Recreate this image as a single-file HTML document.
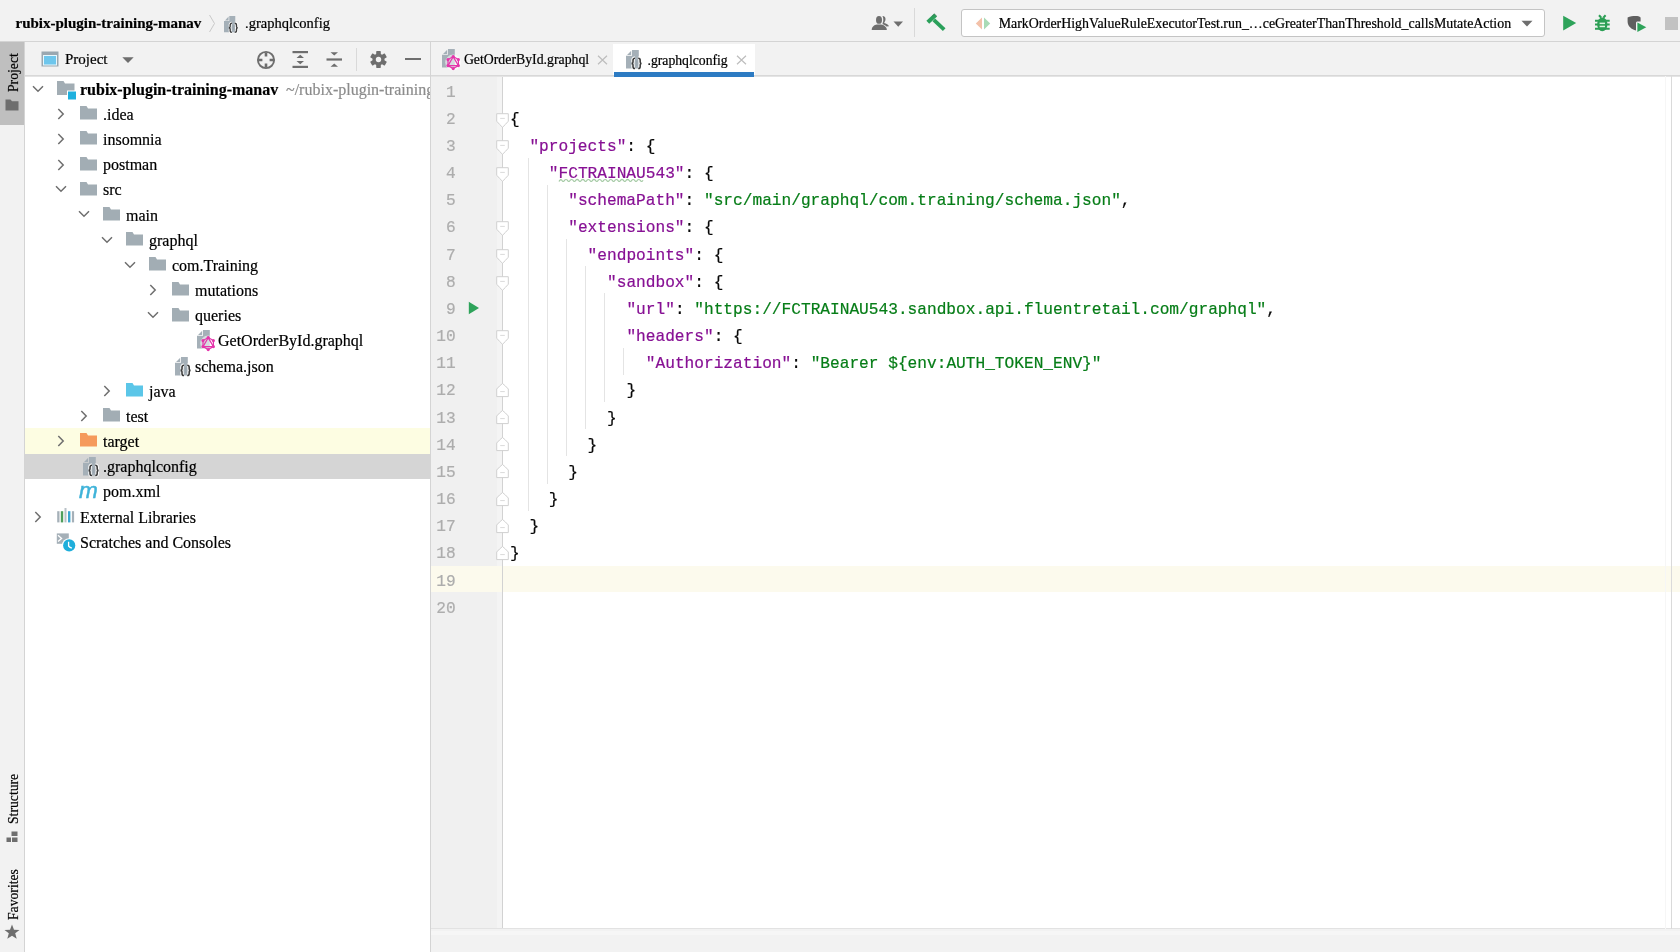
<!DOCTYPE html>
<html><head><meta charset="utf-8">
<style>
*{box-sizing:border-box;margin:0;padding:0}
html,body{width:1680px;height:952px;overflow:hidden;background:#f2f2f2;font-family:"Liberation Serif",serif;color:#000;position:relative}
body{will-change:transform}
.a{position:absolute}
.t{position:absolute;white-space:nowrap;line-height:1;-webkit-text-stroke:0.2px currentColor}
svg{overflow:visible}
</style></head><body>
<div class="a" style="left:0px;top:0px;width:1680px;height:41px;background:#f2f2f2;"></div>
<div class="a" style="left:0px;top:41px;width:1680px;height:1px;background:#d4d4d4;"></div>
<div class="a" style="left:0px;top:42px;width:24px;height:910px;background:#f2f2f2;"></div>
<div class="a" style="left:24px;top:42px;width:1px;height:910px;background:#d4d4d4;"></div>
<div class="a" style="left:0px;top:42px;width:24px;height:83px;background:#bfbfbf;"></div>
<div class="a" style="left:25px;top:42px;width:405px;height:910px;background:#ffffff;"></div>
<div class="a" style="left:25px;top:42px;width:405px;height:33px;background:#f2f2f2;"></div>
<div class="a" style="left:25px;top:75px;width:405px;height:1px;background:#d8d8d8;"></div>
<div class="a" style="left:430px;top:42px;width:1px;height:910px;background:#d4d4d4;"></div>
<div class="a" style="left:431px;top:42px;width:1249px;height:33px;background:#f2f2f2;"></div>
<div class="a" style="left:431px;top:75px;width:1249px;height:1px;background:#d8d8d8;"></div>
<div class="a" style="left:431px;top:76px;width:1249px;height:853px;background:#ffffff;"></div>
<div class="a" style="left:431px;top:76px;width:66px;height:853px;background:#f0f0f0;"></div>
<div class="a" style="left:497px;top:76px;width:5px;height:853px;background:#f4f4f4;"></div>
<div class="a" style="left:502px;top:76px;width:1px;height:853px;background:#d2d2d2;"></div>
<div class="a" style="left:1671px;top:76px;width:1px;height:853px;background:#dadada;"></div>
<div class="a" style="left:25px;top:76px;width:405px;height:1px;background:#e4e4e4;"></div>
<div class="a" style="left:431px;top:76px;width:1249px;height:1px;background:#e4e4e4;"></div>
<div class="a" style="left:431px;top:929px;width:1249px;height:23px;background:#f2f2f2;"></div>
<div class="a" style="left:431px;top:928px;width:1249px;height:1px;background:#e2e2e2;"></div>
<div class="a" style="left:431px;top:931px;width:1249px;height:4px;background:#f6f6f6;"></div>
<div class="t" style="left:15.50px;top:15.64px;font-size:15px;color:#000;font-family:'Liberation Serif',serif;font-weight:bold;">rubix-plugin-training-manav</div>
<svg class="a" style="left:208px;top:14px" width="8" height="19" viewBox="0 0 8 19"><path d="M1.5 1 L6.5 9.5 L1.5 18" fill="none" stroke="#c9c9c9" stroke-width="1"/></svg>
<svg class="a" style="left:223.5px;top:15.6px" width="22" height="22" viewBox="0 0 22 22"><g transform="translate(0,0) scale(0.88)"><path d="M0 5.8 H6 V0 H12.8 V18.6 H0 Z" fill="#a5b0b8"/><path d="M1.1 5 L5.2 0.7 V5 Z" fill="#a5b0b8"/></g><g transform="translate(4.4,6.5120000000000005) scale(0.88)"><path d="M4.0 0.9 C2.4 0.9 2.0 1.8 2.0 3.0 V4.6 C2.0 5.5 1.4 6.0 0.6 6.0 C1.4 6.0 2.0 6.5 2.0 7.4 V9.0 C2.0 10.2 2.4 11.1 4.0 11.1 M4 0.9 H7.2 V11.1 H4 Z" fill="#fff" opacity="0.0"/><path d="M4.0 0.9 C2.4 0.9 2.0 1.8 2.0 3.0 V4.6 C2.0 5.5 1.4 6.0 0.6 6.0 C1.4 6.0 2.0 6.5 2.0 7.4 V9.0 C2.0 10.2 2.4 11.1 4.0 11.1 M7.2 0.9 C8.8 0.9 9.2 1.8 9.2 3.0 V4.6 C9.2 5.5 9.8 6.0 10.6 6.0 C9.8 6.0 9.2 6.5 9.2 7.4 V9.0 C9.2 10.2 8.8 11.1 7.2 11.1" fill="none" stroke="#fff" stroke-width="3.4"/><path d="M4.0 0.9 C2.4 0.9 2.0 1.8 2.0 3.0 V4.6 C2.0 5.5 1.4 6.0 0.6 6.0 C1.4 6.0 2.0 6.5 2.0 7.4 V9.0 C2.0 10.2 2.4 11.1 4.0 11.1 M7.2 0.9 C8.8 0.9 9.2 1.8 9.2 3.0 V4.6 C9.2 5.5 9.8 6.0 10.6 6.0 C9.8 6.0 9.2 6.5 9.2 7.4 V9.0 C9.2 10.2 8.8 11.1 7.2 11.1" fill="none" stroke="#3a3a3a" stroke-width="1.55"/><rect x="4.9" y="2.9" width="1.5" height="5.6" fill="#9aa5ad"/></g></svg>
<div class="t" style="left:245.00px;top:15.96px;font-size:14.5px;color:#000;font-family:'Liberation Serif',serif;">.graphqlconfig</div>
<svg class="a" style="left:870px;top:14px" width="22" height="18" viewBox="0 0 22 18"><path d="M12.4 2 C14.6 2 15.7 3.5 15.5 5.5 C15.3 7.2 14.5 8.3 14.2 8.9 C16.2 9.4 18.6 10.4 19 12.3 L16.4 12.4 C15.2 11 13.6 10.5 12.6 10.2 L12.6 9.2 C13.2 8 13.4 6.5 13.3 5 C13.2 3.8 12.9 2.7 12.4 2 Z" fill="#6e6e6e"/><ellipse cx="9" cy="5.9" rx="3" ry="3.9" fill="#6e6e6e"/><path d="M1.7 16 C1.7 12.6 4.2 11 7 10.5 H11 C13.8 11 16.8 12.6 16.8 16 Z" fill="#6e6e6e"/></svg>
<svg class="a" style="left:893px;top:21px" width="11" height="6" viewBox="0 0 11 6"><path d="M0.5 0.5 H10 L5.25 5.8 Z" fill="#6e6e6e"/></svg>
<div class="a" style="left:914px;top:8px;width:1px;height:29px;background:#d9d9d9;"></div>
<svg class="a" style="left:922px;top:10px" width="28" height="26" viewBox="0 0 28 26"><path d="M5.8 12.2 L13.6 5.0" stroke="#2aa05a" stroke-width="4.2" stroke-linecap="butt"/><path d="M11.8 9.8 L22.2 19.6" stroke="#2aa05a" stroke-width="3.8" stroke-linecap="butt"/><path d="M9.8 6.6 L12.6 4.2 L14.8 6.2" stroke="#3f6a52" stroke-width="1" fill="none" opacity="0.6"/></svg>
<div class="a" style="left:961px;top:9px;width:584px;height:28px;background:#fff;border:1px solid #c4c4c4;border-radius:3px"></div>
<svg class="a" style="left:975px;top:17px" width="16" height="13" viewBox="0 0 16 13"><path d="M7 0.5 L0.8 6.5 L7 12.5 Z" fill="#f3c1a9"/><path d="M9 0.5 L15.2 6.5 L9 12.5 Z" fill="#a9dbb6"/></svg>
<div class="t" style="left:998.70px;top:17.36px;font-size:13.9px;color:#000;font-family:'Liberation Serif',serif;">MarkOrderHighValueRuleExecutorTest.run_…ceGreaterThanThreshold_callsMutateAction</div>
<svg class="a" style="left:1521px;top:20px" width="12" height="7" viewBox="0 0 12 7"><path d="M0.5 0.8 H11.5 L6 6.5 Z" fill="#6e6e6e"/></svg>
<svg class="a" style="left:1562px;top:15px" width="15" height="16" viewBox="0 0 15 16"><path d="M1.2 0.8 L14.2 8 L1.2 15.4 Z" fill="#2ea35a"/></svg>
<svg class="a" style="left:1592px;top:13px" width="20" height="20" viewBox="0 0 20 20"><path d="M7 2.3 L9.3 4.8 M13.6 2.3 L11.3 4.8" stroke="#2c9f55" stroke-width="2" fill="none"/><ellipse cx="10.3" cy="11.4" rx="5.1" ry="6.9" fill="#2c9f55"/><path d="M3 7.7 H17.7 M3 11.5 H17.7 M3 15.7 H17.7" stroke="#2c9f55" stroke-width="2"/><rect x="7.6" y="9.6" width="5.4" height="1.5" fill="#d9f5df"/><rect x="7.6" y="12.7" width="5.4" height="1.5" fill="#d9f5df"/></svg>
<svg class="a" style="left:1626px;top:14px" width="22" height="20" viewBox="0 0 22 20"><path d="M1.6 3.4 C4 2.3 6.8 2 9.5 2 C12 2 13.4 2.5 14.6 3.4 V7.4 H11.6 C10.6 7.4 10 8 10 9 V16.6 C5.5 15.3 1.6 12.3 1.6 7.8 Z" fill="#5f5f5f"/><path d="M11.4 8.6 L20.3 13.3 L11.4 18.1 Z" fill="#2ea35a"/></svg>
<div class="a" style="left:1665px;top:17px;width:13px;height:13px;background:#c2c2c2;"></div>
<div class="t" style="left:7px;top:92px;font-size:13.7px;transform-origin:0 0;transform:rotate(-90deg);font-family:'Liberation Serif',serif;">Project</div>
<svg class="a" style="left:5px;top:99px" width="14" height="12" viewBox="0 0 14 12"><path d="M0.5 0.5 H5.5 L7 2.3 H13.5 V11.5 H0.5 Z" fill="#6e6e6e"/></svg>
<div class="t" style="left:6.5px;top:824px;font-size:13.7px;transform-origin:0 0;transform:rotate(-90deg);font-family:'Liberation Serif',serif;">Structure</div>
<svg class="a" style="left:6px;top:831px" width="12" height="12" viewBox="0 0 12 12"><rect x="5.5" y="0.5" width="6" height="4.5" fill="#6e6e6e"/><rect x="0.5" y="6.5" width="4.5" height="4.5" fill="#6e6e6e"/><rect x="6" y="6.5" width="5.5" height="4.5" fill="#6e6e6e"/></svg>
<div class="t" style="left:6.5px;top:920px;font-size:13.7px;transform-origin:0 0;transform:rotate(-90deg);font-family:'Liberation Serif',serif;">Favorites</div>
<svg class="a" style="left:4px;top:924px" width="16" height="16" viewBox="0 0 16 16"><path d="M8 0.5 L10 5.7 L15.5 5.9 L11.2 9.3 L12.7 14.8 L8 11.7 L3.3 14.8 L4.8 9.3 L0.5 5.9 L6 5.7 Z" fill="#6e6e6e"/></svg>
<svg class="a" style="left:41px;top:51px" width="18" height="16" viewBox="0 0 18 16"><rect x="0.5" y="0.5" width="17" height="15" fill="#9aa7b0"/><rect x="2" y="4" width="14" height="10.5" fill="#e8f7fc"/><rect x="3" y="5" width="12" height="8.5" fill="#6ec6ec"/></svg>
<div class="t" style="left:65.00px;top:51.54px;font-size:15px;color:#000;font-family:'Liberation Serif',serif;">Project</div>
<svg class="a" style="left:122px;top:57px" width="12" height="6" viewBox="0 0 12 6"><path d="M0.3 0.3 H11.7 L6 6 Z" fill="#6e6e6e"/></svg>
<svg class="a" style="left:256px;top:50px" width="20" height="20" viewBox="0 0 20 20"><circle cx="10" cy="10" r="8.1" fill="none" stroke="#6e6e6e" stroke-width="1.9"/><path d="M10 2.4 V6.4 M10 13.6 V17.6 M2.4 10 H6.4 M13.6 10 H17.6" stroke="#6e6e6e" stroke-width="2.6"/></svg>
<svg class="a" style="left:292px;top:50px" width="17" height="19" viewBox="0 0 17 19"><rect x="0.5" y="1" width="15.5" height="2.2" fill="#6e6e6e"/><rect x="0.5" y="15.8" width="15.5" height="2.2" fill="#6e6e6e"/><path d="M4.5 8 L8.25 4.8 L12 8 Z M4.5 11 L8.25 14.2 L12 11 Z" fill="#6e6e6e"/></svg>
<svg class="a" style="left:326px;top:50px" width="17" height="19" viewBox="0 0 17 19"><rect x="0.5" y="8.4" width="15.5" height="2.2" fill="#6e6e6e"/><path d="M4.5 2.2 L8.25 5.6 L12 2.2 Z M4.5 16.8 L8.25 13.4 L12 16.8 Z" fill="#6e6e6e"/></svg>
<div class="a" style="left:356px;top:48px;width:1px;height:23px;background:#d9d9d9;"></div>
<svg class="a" style="left:370px;top:51px" width="17" height="17" viewBox="0 0 17 17"><g transform="translate(8.5,8.5)"><rect x="-2.3" y="-8.4" width="4.6" height="4" rx="0.6" fill="#6e6e6e" transform="rotate(0)"/><rect x="-2.3" y="-8.4" width="4.6" height="4" rx="0.6" fill="#6e6e6e" transform="rotate(60)"/><rect x="-2.3" y="-8.4" width="4.6" height="4" rx="0.6" fill="#6e6e6e" transform="rotate(120)"/><rect x="-2.3" y="-8.4" width="4.6" height="4" rx="0.6" fill="#6e6e6e" transform="rotate(180)"/><rect x="-2.3" y="-8.4" width="4.6" height="4" rx="0.6" fill="#6e6e6e" transform="rotate(240)"/><rect x="-2.3" y="-8.4" width="4.6" height="4" rx="0.6" fill="#6e6e6e" transform="rotate(300)"/><circle r="6.0" fill="#6e6e6e"/><circle r="2.7" fill="#f2f2f2"/></g></svg>
<div class="a" style="left:405px;top:58px;width:16px;height:2.2px;background:#6e6e6e;"></div>
<div class="a" style="left:25px;top:428.09000000000003px;width:405px;height:26.16px;background:#fdfde2;"></div>
<div class="a" style="left:25px;top:454.25px;width:405px;height:25.16px;background:#d5d5d5;"></div>
<svg class="a" style="left:32px;top:84.55px" width="12" height="8" viewBox="0 0 12 8"><path d="M1 1.3 L6 6.2 L11 1.3" fill="none" stroke="#6e6e6e" stroke-width="1.5"/></svg>
<svg class="a" style="left:57px;top:80.85px" width="20" height="19" viewBox="0 0 20 19"><path d="M0 0 H6.5 L8 2.5 H17.5 V14 H0 Z" fill="#a2adb4"/><rect x="10" y="9.5" width="9" height="9" fill="#ffffff"/><rect x="11" y="10.5" width="8" height="8" fill="#1eb0de"/></svg>
<div class="t" style="left:80.00px;top:81.85px;font-size:16px;color:#000;font-family:'Liberation Serif',serif;font-weight:bold;">rubix-plugin-training-manav</div>
<div class="a" style="left:25px;top:76.35px;width:405px;height:25.16px;overflow:hidden">
<div class="t" style="left:261.00px;top:5.50px;font-size:16px;color:#8c8c8c;font-family:'Liberation Serif',serif;">~/rubix-plugin-training-manav</div>
</div>
<svg class="a" style="left:57px;top:108.30999999999999px" width="8" height="12" viewBox="0 0 8 12"><path d="M1.3 1 L6.2 6 L1.3 11" fill="none" stroke="#6e6e6e" stroke-width="1.5"/></svg>
<svg class="a" style="left:80px;top:106.30999999999999px" width="18" height="14" viewBox="0 0 18 14"><path d="M0 0 H6.5 L8 2.5 H17 V13.5 H0 Z" fill="#a2adb4"/></svg>
<div class="t" style="left:103.00px;top:107.01px;font-size:16px;color:#000;font-family:'Liberation Serif',serif;">.idea</div>
<svg class="a" style="left:57px;top:133.47px" width="8" height="12" viewBox="0 0 8 12"><path d="M1.3 1 L6.2 6 L1.3 11" fill="none" stroke="#6e6e6e" stroke-width="1.5"/></svg>
<svg class="a" style="left:80px;top:131.47px" width="18" height="14" viewBox="0 0 18 14"><path d="M0 0 H6.5 L8 2.5 H17 V13.5 H0 Z" fill="#a2adb4"/></svg>
<div class="t" style="left:103.00px;top:132.17px;font-size:16px;color:#000;font-family:'Liberation Serif',serif;">insomnia</div>
<svg class="a" style="left:57px;top:158.63px" width="8" height="12" viewBox="0 0 8 12"><path d="M1.3 1 L6.2 6 L1.3 11" fill="none" stroke="#6e6e6e" stroke-width="1.5"/></svg>
<svg class="a" style="left:80px;top:156.63px" width="18" height="14" viewBox="0 0 18 14"><path d="M0 0 H6.5 L8 2.5 H17 V13.5 H0 Z" fill="#a2adb4"/></svg>
<div class="t" style="left:103.00px;top:157.33px;font-size:16px;color:#000;font-family:'Liberation Serif',serif;">postman</div>
<svg class="a" style="left:55px;top:185.19px" width="12" height="8" viewBox="0 0 12 8"><path d="M1 1.3 L6 6.2 L11 1.3" fill="none" stroke="#6e6e6e" stroke-width="1.5"/></svg>
<svg class="a" style="left:80px;top:181.79000000000002px" width="18" height="14" viewBox="0 0 18 14"><path d="M0 0 H6.5 L8 2.5 H17 V13.5 H0 Z" fill="#a2adb4"/></svg>
<div class="t" style="left:103.00px;top:182.49px;font-size:16px;color:#000;font-family:'Liberation Serif',serif;">src</div>
<svg class="a" style="left:78px;top:210.34999999999997px" width="12" height="8" viewBox="0 0 12 8"><path d="M1 1.3 L6 6.2 L11 1.3" fill="none" stroke="#6e6e6e" stroke-width="1.5"/></svg>
<svg class="a" style="left:103px;top:206.95px" width="18" height="14" viewBox="0 0 18 14"><path d="M0 0 H6.5 L8 2.5 H17 V13.5 H0 Z" fill="#a2adb4"/></svg>
<div class="t" style="left:126.00px;top:207.65px;font-size:16px;color:#000;font-family:'Liberation Serif',serif;">main</div>
<svg class="a" style="left:101px;top:235.51px" width="12" height="8" viewBox="0 0 12 8"><path d="M1 1.3 L6 6.2 L11 1.3" fill="none" stroke="#6e6e6e" stroke-width="1.5"/></svg>
<svg class="a" style="left:126px;top:232.11px" width="18" height="14" viewBox="0 0 18 14"><path d="M0 0 H6.5 L8 2.5 H17 V13.5 H0 Z" fill="#a2adb4"/></svg>
<div class="t" style="left:149.00px;top:232.81px;font-size:16px;color:#000;font-family:'Liberation Serif',serif;">graphql</div>
<svg class="a" style="left:124px;top:260.67px" width="12" height="8" viewBox="0 0 12 8"><path d="M1 1.3 L6 6.2 L11 1.3" fill="none" stroke="#6e6e6e" stroke-width="1.5"/></svg>
<svg class="a" style="left:149px;top:257.27px" width="18" height="14" viewBox="0 0 18 14"><path d="M0 0 H6.5 L8 2.5 H17 V13.5 H0 Z" fill="#a2adb4"/></svg>
<div class="t" style="left:172.00px;top:257.97px;font-size:16px;color:#000;font-family:'Liberation Serif',serif;">com.Training</div>
<svg class="a" style="left:149px;top:284.43px" width="8" height="12" viewBox="0 0 8 12"><path d="M1.3 1 L6.2 6 L1.3 11" fill="none" stroke="#6e6e6e" stroke-width="1.5"/></svg>
<svg class="a" style="left:172px;top:282.43px" width="18" height="14" viewBox="0 0 18 14"><path d="M0 0 H6.5 L8 2.5 H17 V13.5 H0 Z" fill="#a2adb4"/></svg>
<div class="t" style="left:195.00px;top:283.13px;font-size:16px;color:#000;font-family:'Liberation Serif',serif;">mutations</div>
<svg class="a" style="left:147px;top:310.98999999999995px" width="12" height="8" viewBox="0 0 12 8"><path d="M1 1.3 L6 6.2 L11 1.3" fill="none" stroke="#6e6e6e" stroke-width="1.5"/></svg>
<svg class="a" style="left:172px;top:307.59px" width="18" height="14" viewBox="0 0 18 14"><path d="M0 0 H6.5 L8 2.5 H17 V13.5 H0 Z" fill="#a2adb4"/></svg>
<div class="t" style="left:195.00px;top:308.29px;font-size:16px;color:#000;font-family:'Liberation Serif',serif;">queries</div>
<svg class="a" style="left:197.0px;top:330.4px" width="22" height="22" viewBox="0 0 22 22"><g transform="translate(0,0) scale(1.0)"><path d="M0 5.8 H6 V0 H12.8 V18.6 H0 Z" fill="#a5b0b8"/><path d="M1.1 5 L5.2 0.7 V5 Z" fill="#a5b0b8"/></g><circle cx="11.2" cy="13.6" r="8.0" fill="#fff" opacity="0.55"/><path d="M11.20 7.60 L16.40 10.60 L16.40 16.60 L11.20 19.60 L6.00 16.60 L6.00 10.60 Z" fill="none" stroke="#e535ab" stroke-width="1.2"/><path d="M11.20 7.60 L16.40 16.60 L6.00 16.60 Z" fill="none" stroke="#e535ab" stroke-width="1.2"/><circle cx="11.20" cy="7.60" r="1.55" fill="#e535ab"/><circle cx="16.40" cy="10.60" r="1.55" fill="#e535ab"/><circle cx="16.40" cy="16.60" r="1.55" fill="#e535ab"/><circle cx="11.20" cy="19.60" r="1.55" fill="#e535ab"/><circle cx="6.00" cy="16.60" r="1.55" fill="#e535ab"/><circle cx="6.00" cy="10.60" r="1.55" fill="#e535ab"/></svg>
<div class="t" style="left:218.00px;top:333.45px;font-size:16px;color:#000;font-family:'Liberation Serif',serif;">GetOrderById.graphql</div>
<svg class="a" style="left:175.0px;top:356.81px" width="22" height="22" viewBox="0 0 22 22"><g transform="translate(0,0) scale(1.0)"><path d="M0 5.8 H6 V0 H12.8 V18.6 H0 Z" fill="#a5b0b8"/><path d="M1.1 5 L5.2 0.7 V5 Z" fill="#a5b0b8"/></g><g transform="translate(5.0,7.4) scale(1.0)"><path d="M4.0 0.9 C2.4 0.9 2.0 1.8 2.0 3.0 V4.6 C2.0 5.5 1.4 6.0 0.6 6.0 C1.4 6.0 2.0 6.5 2.0 7.4 V9.0 C2.0 10.2 2.4 11.1 4.0 11.1 M4 0.9 H7.2 V11.1 H4 Z" fill="#fff" opacity="0.0"/><path d="M4.0 0.9 C2.4 0.9 2.0 1.8 2.0 3.0 V4.6 C2.0 5.5 1.4 6.0 0.6 6.0 C1.4 6.0 2.0 6.5 2.0 7.4 V9.0 C2.0 10.2 2.4 11.1 4.0 11.1 M7.2 0.9 C8.8 0.9 9.2 1.8 9.2 3.0 V4.6 C9.2 5.5 9.8 6.0 10.6 6.0 C9.8 6.0 9.2 6.5 9.2 7.4 V9.0 C9.2 10.2 8.8 11.1 7.2 11.1" fill="none" stroke="#fff" stroke-width="3.4"/><path d="M4.0 0.9 C2.4 0.9 2.0 1.8 2.0 3.0 V4.6 C2.0 5.5 1.4 6.0 0.6 6.0 C1.4 6.0 2.0 6.5 2.0 7.4 V9.0 C2.0 10.2 2.4 11.1 4.0 11.1 M7.2 0.9 C8.8 0.9 9.2 1.8 9.2 3.0 V4.6 C9.2 5.5 9.8 6.0 10.6 6.0 C9.8 6.0 9.2 6.5 9.2 7.4 V9.0 C9.2 10.2 8.8 11.1 7.2 11.1" fill="none" stroke="#3a3a3a" stroke-width="1.55"/><rect x="4.9" y="2.9" width="1.5" height="5.6" fill="#9aa5ad"/></g></svg>
<div class="t" style="left:195.00px;top:358.61px;font-size:16px;color:#000;font-family:'Liberation Serif',serif;">schema.json</div>
<svg class="a" style="left:103px;top:385.07px" width="8" height="12" viewBox="0 0 8 12"><path d="M1.3 1 L6.2 6 L1.3 11" fill="none" stroke="#6e6e6e" stroke-width="1.5"/></svg>
<svg class="a" style="left:126px;top:383.07px" width="18" height="14" viewBox="0 0 18 14"><path d="M0 0 H6.5 L8 2.5 H17 V13.5 H0 Z" fill="#5bc6e8"/></svg>
<div class="t" style="left:149.00px;top:383.77px;font-size:16px;color:#000;font-family:'Liberation Serif',serif;">java</div>
<svg class="a" style="left:80px;top:410.22999999999996px" width="8" height="12" viewBox="0 0 8 12"><path d="M1.3 1 L6.2 6 L1.3 11" fill="none" stroke="#6e6e6e" stroke-width="1.5"/></svg>
<svg class="a" style="left:103px;top:408.22999999999996px" width="18" height="14" viewBox="0 0 18 14"><path d="M0 0 H6.5 L8 2.5 H17 V13.5 H0 Z" fill="#a2adb4"/></svg>
<div class="t" style="left:126.00px;top:408.93px;font-size:16px;color:#000;font-family:'Liberation Serif',serif;">test</div>
<svg class="a" style="left:57px;top:435.39000000000004px" width="8" height="12" viewBox="0 0 8 12"><path d="M1.3 1 L6.2 6 L1.3 11" fill="none" stroke="#6e6e6e" stroke-width="1.5"/></svg>
<svg class="a" style="left:80px;top:433.39000000000004px" width="18" height="14" viewBox="0 0 18 14"><path d="M0 0 H6.5 L8 2.5 H17 V13.5 H0 Z" fill="#f59a5b"/></svg>
<div class="t" style="left:103.00px;top:434.09px;font-size:16px;color:#000;font-family:'Liberation Serif',serif;">target</div>
<svg class="a" style="left:83.0px;top:457.45px" width="22" height="22" viewBox="0 0 22 22"><g transform="translate(0,0) scale(1.0)"><path d="M0 5.8 H6 V0 H12.8 V18.6 H0 Z" fill="#a5b0b8"/><path d="M1.1 5 L5.2 0.7 V5 Z" fill="#a5b0b8"/></g><g transform="translate(5.0,7.4) scale(1.0)"><path d="M4.0 0.9 C2.4 0.9 2.0 1.8 2.0 3.0 V4.6 C2.0 5.5 1.4 6.0 0.6 6.0 C1.4 6.0 2.0 6.5 2.0 7.4 V9.0 C2.0 10.2 2.4 11.1 4.0 11.1 M4 0.9 H7.2 V11.1 H4 Z" fill="#fff" opacity="0.0"/><path d="M4.0 0.9 C2.4 0.9 2.0 1.8 2.0 3.0 V4.6 C2.0 5.5 1.4 6.0 0.6 6.0 C1.4 6.0 2.0 6.5 2.0 7.4 V9.0 C2.0 10.2 2.4 11.1 4.0 11.1 M7.2 0.9 C8.8 0.9 9.2 1.8 9.2 3.0 V4.6 C9.2 5.5 9.8 6.0 10.6 6.0 C9.8 6.0 9.2 6.5 9.2 7.4 V9.0 C9.2 10.2 8.8 11.1 7.2 11.1" fill="none" stroke="#fff" stroke-width="3.4"/><path d="M4.0 0.9 C2.4 0.9 2.0 1.8 2.0 3.0 V4.6 C2.0 5.5 1.4 6.0 0.6 6.0 C1.4 6.0 2.0 6.5 2.0 7.4 V9.0 C2.0 10.2 2.4 11.1 4.0 11.1 M7.2 0.9 C8.8 0.9 9.2 1.8 9.2 3.0 V4.6 C9.2 5.5 9.8 6.0 10.6 6.0 C9.8 6.0 9.2 6.5 9.2 7.4 V9.0 C9.2 10.2 8.8 11.1 7.2 11.1" fill="none" stroke="#3a3a3a" stroke-width="1.55"/><rect x="4.9" y="2.9" width="1.5" height="5.6" fill="#9aa5ad"/></g></svg>
<div class="t" style="left:103.00px;top:459.25px;font-size:16px;color:#000;font-family:'Liberation Serif',serif;">.graphqlconfig</div>
<div class="t" style="left:79px;top:479.80999999999995px;font-size:22.5px;font-family:'Liberation Sans',sans-serif;font-style:italic;font-weight:normal;-webkit-text-stroke:0.5px #3fb3d9;color:#3fb3d9;letter-spacing:-1px">m</div>
<div class="t" style="left:103.00px;top:484.41px;font-size:16px;color:#000;font-family:'Liberation Serif',serif;">pom.xml</div>
<svg class="a" style="left:34px;top:510.87000000000006px" width="8" height="12" viewBox="0 0 8 12"><path d="M1.3 1 L6.2 6 L1.3 11" fill="none" stroke="#6e6e6e" stroke-width="1.5"/></svg>
<svg class="a" style="left:57px;top:508.07000000000005px" width="19" height="16" viewBox="0 0 19 16"><rect x="0.2" y="3.2" width="2.3" height="11.2" fill="#a5b0b8"/><rect x="3.8" y="3.2" width="2.4" height="11.2" fill="#4f9e5c"/><rect x="7.5" y="0" width="2.0" height="14.4" fill="#b9c2c8"/><rect x="11" y="3.2" width="2.4" height="11.2" fill="#3aa6d0"/><rect x="14.9" y="3.2" width="2.2" height="11.2" fill="#a5b0b8"/></svg>
<div class="t" style="left:80.00px;top:509.57px;font-size:16px;color:#000;font-family:'Liberation Serif',serif;">External Libraries</div>
<svg class="a" style="left:57px;top:529.23px" width="22" height="24" viewBox="0 0 22 24"><path d="M-0.2 4.4 H11.8 V14.8 H-0.2 Z" fill="#a5b0b8"/><path d="M1 6.2 L4.6 9.4 L1 12.6" stroke="#fff" stroke-width="1.3" fill="none"/><circle cx="12.2" cy="16.4" r="7.2" fill="#fff"/><circle cx="12.2" cy="16.4" r="6.1" fill="#1eaedb"/><path d="M11.6 12.8 V17 C12.5 18.2 13.5 18.8 14.8 19" stroke="#fff" stroke-width="1.3" fill="none"/></svg>
<div class="t" style="left:80.00px;top:534.73px;font-size:16px;color:#000;font-family:'Liberation Serif',serif;">Scratches and Consoles</div>
<svg class="a" style="left:441.8px;top:48.7px" width="22" height="22" viewBox="0 0 22 22"><g transform="translate(0,0) scale(1.0)"><path d="M0 5.8 H6 V0 H12.8 V18.6 H0 Z" fill="#a5b0b8"/><path d="M1.1 5 L5.2 0.7 V5 Z" fill="#a5b0b8"/></g><circle cx="11.2" cy="13.6" r="8.0" fill="#fff" opacity="0.55"/><path d="M11.20 7.60 L16.40 10.60 L16.40 16.60 L11.20 19.60 L6.00 16.60 L6.00 10.60 Z" fill="none" stroke="#e535ab" stroke-width="1.2"/><path d="M11.20 7.60 L16.40 16.60 L6.00 16.60 Z" fill="none" stroke="#e535ab" stroke-width="1.2"/><circle cx="11.20" cy="7.60" r="1.55" fill="#e535ab"/><circle cx="16.40" cy="10.60" r="1.55" fill="#e535ab"/><circle cx="16.40" cy="16.60" r="1.55" fill="#e535ab"/><circle cx="11.20" cy="19.60" r="1.55" fill="#e535ab"/><circle cx="6.00" cy="16.60" r="1.55" fill="#e535ab"/><circle cx="6.00" cy="10.60" r="1.55" fill="#e535ab"/></svg>
<div class="t" style="left:463.90px;top:53.44px;font-size:13.8px;color:#000;font-family:'Liberation Serif',serif;">GetOrderById.graphql</div>
<svg class="a" style="left:597px;top:55px" width="11" height="10" viewBox="0 0 11 10"><path d="M1 0.8 L10 9.2 M10 0.8 L1 9.2" stroke="#bdbdbd" stroke-width="1.2"/></svg>
<div class="a" style="left:613px;top:44px;width:142px;height:31px;background:#ffffff;"></div>
<div class="a" style="left:614px;top:72px;width:140px;height:5px;background:#2d7bc3;"></div>
<svg class="a" style="left:625.5px;top:50.1px" width="22" height="22" viewBox="0 0 22 22"><g transform="translate(0,0) scale(1.0)"><path d="M0 5.8 H6 V0 H12.8 V18.6 H0 Z" fill="#a5b0b8"/><path d="M1.1 5 L5.2 0.7 V5 Z" fill="#a5b0b8"/></g><g transform="translate(5.0,7.4) scale(1.0)"><path d="M4.0 0.9 C2.4 0.9 2.0 1.8 2.0 3.0 V4.6 C2.0 5.5 1.4 6.0 0.6 6.0 C1.4 6.0 2.0 6.5 2.0 7.4 V9.0 C2.0 10.2 2.4 11.1 4.0 11.1 M4 0.9 H7.2 V11.1 H4 Z" fill="#fff" opacity="0.0"/><path d="M4.0 0.9 C2.4 0.9 2.0 1.8 2.0 3.0 V4.6 C2.0 5.5 1.4 6.0 0.6 6.0 C1.4 6.0 2.0 6.5 2.0 7.4 V9.0 C2.0 10.2 2.4 11.1 4.0 11.1 M7.2 0.9 C8.8 0.9 9.2 1.8 9.2 3.0 V4.6 C9.2 5.5 9.8 6.0 10.6 6.0 C9.8 6.0 9.2 6.5 9.2 7.4 V9.0 C9.2 10.2 8.8 11.1 7.2 11.1" fill="none" stroke="#fff" stroke-width="3.4"/><path d="M4.0 0.9 C2.4 0.9 2.0 1.8 2.0 3.0 V4.6 C2.0 5.5 1.4 6.0 0.6 6.0 C1.4 6.0 2.0 6.5 2.0 7.4 V9.0 C2.0 10.2 2.4 11.1 4.0 11.1 M7.2 0.9 C8.8 0.9 9.2 1.8 9.2 3.0 V4.6 C9.2 5.5 9.8 6.0 10.6 6.0 C9.8 6.0 9.2 6.5 9.2 7.4 V9.0 C9.2 10.2 8.8 11.1 7.2 11.1" fill="none" stroke="#3a3a3a" stroke-width="1.55"/><rect x="4.9" y="2.9" width="1.5" height="5.6" fill="#9aa5ad"/></g></svg>
<div class="t" style="left:647.50px;top:53.53px;font-size:13.7px;color:#000;font-family:'Liberation Serif',serif;">.graphqlconfig</div>
<svg class="a" style="left:736px;top:55px" width="11" height="10" viewBox="0 0 11 10"><path d="M1 0.8 L10 9.2 M10 0.8 L1 9.2" stroke="#bdbdbd" stroke-width="1.2"/></svg>
<div class="a" style="left:431px;top:565.6600000000001px;width:71px;height:26.57px;background:#fcfaed;"></div>
<div class="a" style="left:503px;top:565.6600000000001px;width:1177px;height:26.57px;background:#fcfaed;"></div>
<div class="a" style="left:1671px;top:76px;width:1px;height:853px;background:#dadada;"></div>
<div class="a" style="left:1665px;top:76px;width:1px;height:853px;background:#f6f6f6;"></div>
<div class="t" style="left:445.90px;top:84.51px;font-size:16.16px;color:#adadad;font-family:'Liberation Mono',monospace;">1</div>
<div class="t" style="left:445.90px;top:111.68px;font-size:16.16px;color:#adadad;font-family:'Liberation Mono',monospace;">2</div>
<div class="t" style="left:445.90px;top:138.85px;font-size:16.16px;color:#adadad;font-family:'Liberation Mono',monospace;">3</div>
<div class="t" style="left:445.90px;top:166.02px;font-size:16.16px;color:#adadad;font-family:'Liberation Mono',monospace;">4</div>
<div class="t" style="left:445.90px;top:193.19px;font-size:16.16px;color:#adadad;font-family:'Liberation Mono',monospace;">5</div>
<div class="t" style="left:445.90px;top:220.36px;font-size:16.16px;color:#adadad;font-family:'Liberation Mono',monospace;">6</div>
<div class="t" style="left:445.90px;top:247.53px;font-size:16.16px;color:#adadad;font-family:'Liberation Mono',monospace;">7</div>
<div class="t" style="left:445.90px;top:274.70px;font-size:16.16px;color:#adadad;font-family:'Liberation Mono',monospace;">8</div>
<div class="t" style="left:445.90px;top:301.87px;font-size:16.16px;color:#adadad;font-family:'Liberation Mono',monospace;">9</div>
<div class="t" style="left:436.20px;top:329.04px;font-size:16.16px;color:#adadad;font-family:'Liberation Mono',monospace;">10</div>
<div class="t" style="left:436.20px;top:356.21px;font-size:16.16px;color:#adadad;font-family:'Liberation Mono',monospace;">11</div>
<div class="t" style="left:436.20px;top:383.38px;font-size:16.16px;color:#adadad;font-family:'Liberation Mono',monospace;">12</div>
<div class="t" style="left:436.20px;top:410.55px;font-size:16.16px;color:#adadad;font-family:'Liberation Mono',monospace;">13</div>
<div class="t" style="left:436.20px;top:437.72px;font-size:16.16px;color:#adadad;font-family:'Liberation Mono',monospace;">14</div>
<div class="t" style="left:436.20px;top:464.89px;font-size:16.16px;color:#adadad;font-family:'Liberation Mono',monospace;">15</div>
<div class="t" style="left:436.20px;top:492.06px;font-size:16.16px;color:#adadad;font-family:'Liberation Mono',monospace;">16</div>
<div class="t" style="left:436.20px;top:519.23px;font-size:16.16px;color:#adadad;font-family:'Liberation Mono',monospace;">17</div>
<div class="t" style="left:436.20px;top:546.40px;font-size:16.16px;color:#adadad;font-family:'Liberation Mono',monospace;">18</div>
<div class="t" style="left:436.20px;top:573.57px;font-size:16.16px;color:#adadad;font-family:'Liberation Mono',monospace;">19</div>
<div class="t" style="left:436.20px;top:600.74px;font-size:16.16px;color:#adadad;font-family:'Liberation Mono',monospace;">20</div>
<div class="a" style="left:528px;top:157.51px;width:1px;height:353.21000000000004px;background:#e4e4e4;"></div>
<div class="a" style="left:547px;top:184.68px;width:1px;height:298.87px;background:#e4e4e4;"></div>
<div class="a" style="left:566px;top:239.02px;width:1px;height:217.36px;background:#e4e4e4;"></div>
<div class="a" style="left:585px;top:266.19px;width:1px;height:163.02px;background:#e4e4e4;"></div>
<div class="a" style="left:604px;top:293.36px;width:1px;height:108.68px;background:#e4e4e4;"></div>
<div class="a" style="left:623px;top:347.70000000000005px;width:1px;height:27.17px;background:#e4e4e4;"></div>
<div class="t" style="left:510.00px;top:111.68px;font-size:16.16px;color:#080808;font-family:'Liberation Mono',monospace;white-space:pre;">{</div>
<div class="t" style="left:529.40px;top:138.85px;font-size:16.16px;color:#080808;font-family:'Liberation Mono',monospace;white-space:pre;"><span style="color:#871094">"projects"</span>: {</div>
<div class="t" style="left:548.80px;top:166.02px;font-size:16.16px;color:#080808;font-family:'Liberation Mono',monospace;white-space:pre;"><span style="color:#871094">"FCTRAINAU543"</span>: {</div>
<div class="t" style="left:568.20px;top:193.19px;font-size:16.16px;color:#080808;font-family:'Liberation Mono',monospace;white-space:pre;"><span style="color:#871094">"schemaPath"</span>: <span style="color:#067d17">"src/main/graphql/com.training/schema.json"</span>,</div>
<div class="t" style="left:568.20px;top:220.36px;font-size:16.16px;color:#080808;font-family:'Liberation Mono',monospace;white-space:pre;"><span style="color:#871094">"extensions"</span>: {</div>
<div class="t" style="left:587.60px;top:247.53px;font-size:16.16px;color:#080808;font-family:'Liberation Mono',monospace;white-space:pre;"><span style="color:#871094">"endpoints"</span>: {</div>
<div class="t" style="left:607.00px;top:274.70px;font-size:16.16px;color:#080808;font-family:'Liberation Mono',monospace;white-space:pre;"><span style="color:#871094">"sandbox"</span>: {</div>
<div class="t" style="left:626.40px;top:301.87px;font-size:16.16px;color:#080808;font-family:'Liberation Mono',monospace;white-space:pre;"><span style="color:#871094">"url"</span>: <span style="color:#067d17">"https://FCTRAINAU543.sandbox.api.fluentretail.com/graphql"</span>,</div>
<div class="t" style="left:626.40px;top:329.04px;font-size:16.16px;color:#080808;font-family:'Liberation Mono',monospace;white-space:pre;"><span style="color:#871094">"headers"</span>: {</div>
<div class="t" style="left:645.80px;top:356.21px;font-size:16.16px;color:#080808;font-family:'Liberation Mono',monospace;white-space:pre;"><span style="color:#871094">"Authorization"</span>: <span style="color:#067d17">"Bearer ${env:AUTH_TOKEN_ENV}"</span></div>
<div class="t" style="left:626.40px;top:383.38px;font-size:16.16px;color:#080808;font-family:'Liberation Mono',monospace;white-space:pre;">}</div>
<div class="t" style="left:607.00px;top:410.55px;font-size:16.16px;color:#080808;font-family:'Liberation Mono',monospace;white-space:pre;">}</div>
<div class="t" style="left:587.60px;top:437.72px;font-size:16.16px;color:#080808;font-family:'Liberation Mono',monospace;white-space:pre;">}</div>
<div class="t" style="left:568.20px;top:464.89px;font-size:16.16px;color:#080808;font-family:'Liberation Mono',monospace;white-space:pre;">}</div>
<div class="t" style="left:548.80px;top:492.06px;font-size:16.16px;color:#080808;font-family:'Liberation Mono',monospace;white-space:pre;">}</div>
<div class="t" style="left:529.40px;top:519.23px;font-size:16.16px;color:#080808;font-family:'Liberation Mono',monospace;white-space:pre;">}</div>
<div class="t" style="left:510.00px;top:546.40px;font-size:16.16px;color:#080808;font-family:'Liberation Mono',monospace;white-space:pre;">}</div>
<svg class="a" style="left:559px;top:179px" width="90" height="5" viewBox="0 0 90 5"><path d="M0 2.6 Q1.40 -0.2 2.80 1.2 Q4.20 3.6 5.60 1.2 Q7.00 -0.2 8.40 1.2 Q9.80 3.6 11.20 1.2 Q12.60 -0.2 14.00 1.2 Q15.40 3.6 16.80 1.2 Q18.20 -0.2 19.60 1.2 Q21.00 3.6 22.40 1.2 Q23.80 -0.2 25.20 1.2 Q26.60 3.6 28.00 1.2 Q29.40 -0.2 30.80 1.2 Q32.20 3.6 33.60 1.2 Q35.00 -0.2 36.40 1.2 Q37.80 3.6 39.20 1.2 Q40.60 -0.2 42.00 1.2 Q43.40 3.6 44.80 1.2 Q46.20 -0.2 47.60 1.2 Q49.00 3.6 50.40 1.2 Q51.80 -0.2 53.20 1.2 Q54.60 3.6 56.00 1.2 Q57.40 -0.2 58.80 1.2 Q60.20 3.6 61.60 1.2 Q63.00 -0.2 64.40 1.2 Q65.80 3.6 67.20 1.2 Q68.60 -0.2 70.00 1.2 Q71.40 3.6 72.80 1.2 Q74.20 -0.2 75.60 1.2 Q77.00 3.6 78.40 1.2 Q79.80 -0.2 81.20 1.2 Q82.60 3.6 84.00 1.2" fill="none" stroke="#a3c9a3" stroke-width="1.2"/></svg>
<svg class="a" style="left:496px;top:112.77px" width="13" height="16" viewBox="0 0 13 16"><path d="M0.7 0.7 H12.3 V8.2 Q9.5 11.5 6.5 14.3 Q3.5 11.5 0.7 8.2 Z" fill="#fff" stroke="#d0d0d0" stroke-width="1"/><path d="M4.2 5.4 H8.8" stroke="#dadada" stroke-width="1"/></svg>
<svg class="a" style="left:496px;top:139.94px" width="13" height="16" viewBox="0 0 13 16"><path d="M0.7 0.7 H12.3 V8.2 Q9.5 11.5 6.5 14.3 Q3.5 11.5 0.7 8.2 Z" fill="#fff" stroke="#d0d0d0" stroke-width="1"/><path d="M4.2 5.4 H8.8" stroke="#dadada" stroke-width="1"/></svg>
<svg class="a" style="left:496px;top:167.10999999999999px" width="13" height="16" viewBox="0 0 13 16"><path d="M0.7 0.7 H12.3 V8.2 Q9.5 11.5 6.5 14.3 Q3.5 11.5 0.7 8.2 Z" fill="#fff" stroke="#d0d0d0" stroke-width="1"/><path d="M4.2 5.4 H8.8" stroke="#dadada" stroke-width="1"/></svg>
<svg class="a" style="left:496px;top:221.45000000000002px" width="13" height="16" viewBox="0 0 13 16"><path d="M0.7 0.7 H12.3 V8.2 Q9.5 11.5 6.5 14.3 Q3.5 11.5 0.7 8.2 Z" fill="#fff" stroke="#d0d0d0" stroke-width="1"/><path d="M4.2 5.4 H8.8" stroke="#dadada" stroke-width="1"/></svg>
<svg class="a" style="left:496px;top:248.62px" width="13" height="16" viewBox="0 0 13 16"><path d="M0.7 0.7 H12.3 V8.2 Q9.5 11.5 6.5 14.3 Q3.5 11.5 0.7 8.2 Z" fill="#fff" stroke="#d0d0d0" stroke-width="1"/><path d="M4.2 5.4 H8.8" stroke="#dadada" stroke-width="1"/></svg>
<svg class="a" style="left:496px;top:275.79px" width="13" height="16" viewBox="0 0 13 16"><path d="M0.7 0.7 H12.3 V8.2 Q9.5 11.5 6.5 14.3 Q3.5 11.5 0.7 8.2 Z" fill="#fff" stroke="#d0d0d0" stroke-width="1"/><path d="M4.2 5.4 H8.8" stroke="#dadada" stroke-width="1"/></svg>
<svg class="a" style="left:496px;top:330.13000000000005px" width="13" height="16" viewBox="0 0 13 16"><path d="M0.7 0.7 H12.3 V8.2 Q9.5 11.5 6.5 14.3 Q3.5 11.5 0.7 8.2 Z" fill="#fff" stroke="#d0d0d0" stroke-width="1"/><path d="M4.2 5.4 H8.8" stroke="#dadada" stroke-width="1"/></svg>
<svg class="a" style="left:496px;top:382.87px" width="13" height="16" viewBox="0 0 13 16"><path d="M0.7 13.6 H12.3 V6 Q9.5 2.8 6.5 0.5 Q3.5 2.8 0.7 6 Z" fill="#fff" stroke="#d0d0d0" stroke-width="1"/><path d="M4.2 8.6 H8.8" stroke="#dadada" stroke-width="1"/></svg>
<svg class="a" style="left:496px;top:410.04px" width="13" height="16" viewBox="0 0 13 16"><path d="M0.7 13.6 H12.3 V6 Q9.5 2.8 6.5 0.5 Q3.5 2.8 0.7 6 Z" fill="#fff" stroke="#d0d0d0" stroke-width="1"/><path d="M4.2 8.6 H8.8" stroke="#dadada" stroke-width="1"/></svg>
<svg class="a" style="left:496px;top:437.21000000000004px" width="13" height="16" viewBox="0 0 13 16"><path d="M0.7 13.6 H12.3 V6 Q9.5 2.8 6.5 0.5 Q3.5 2.8 0.7 6 Z" fill="#fff" stroke="#d0d0d0" stroke-width="1"/><path d="M4.2 8.6 H8.8" stroke="#dadada" stroke-width="1"/></svg>
<svg class="a" style="left:496px;top:464.38px" width="13" height="16" viewBox="0 0 13 16"><path d="M0.7 13.6 H12.3 V6 Q9.5 2.8 6.5 0.5 Q3.5 2.8 0.7 6 Z" fill="#fff" stroke="#d0d0d0" stroke-width="1"/><path d="M4.2 8.6 H8.8" stroke="#dadada" stroke-width="1"/></svg>
<svg class="a" style="left:496px;top:491.55px" width="13" height="16" viewBox="0 0 13 16"><path d="M0.7 13.6 H12.3 V6 Q9.5 2.8 6.5 0.5 Q3.5 2.8 0.7 6 Z" fill="#fff" stroke="#d0d0d0" stroke-width="1"/><path d="M4.2 8.6 H8.8" stroke="#dadada" stroke-width="1"/></svg>
<svg class="a" style="left:496px;top:518.72px" width="13" height="16" viewBox="0 0 13 16"><path d="M0.7 13.6 H12.3 V6 Q9.5 2.8 6.5 0.5 Q3.5 2.8 0.7 6 Z" fill="#fff" stroke="#d0d0d0" stroke-width="1"/><path d="M4.2 8.6 H8.8" stroke="#dadada" stroke-width="1"/></svg>
<svg class="a" style="left:496px;top:545.8900000000001px" width="13" height="16" viewBox="0 0 13 16"><path d="M0.7 13.6 H12.3 V6 Q9.5 2.8 6.5 0.5 Q3.5 2.8 0.7 6 Z" fill="#fff" stroke="#d0d0d0" stroke-width="1"/><path d="M4.2 8.6 H8.8" stroke="#dadada" stroke-width="1"/></svg>
<svg class="a" style="left:468px;top:301px" width="12" height="14" viewBox="0 0 12 14"><path d="M0.8 0.8 L11 7 L0.8 13.2 Z" fill="#2ea35a"/></svg>
</body></html>
